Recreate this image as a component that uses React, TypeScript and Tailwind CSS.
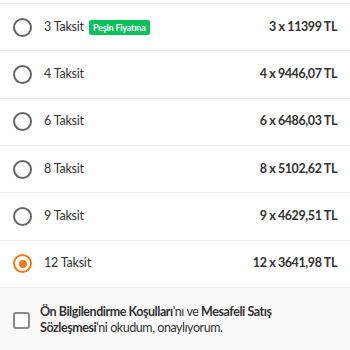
import { useState } from "react";

const options = [
  { count: 3, amount: "3 x 11399 TL", badge: true },
  { count: 4, amount: "4 x 9446,07 TL" },
  { count: 6, amount: "6 x 6486,03 TL" },
  { count: 8, amount: "8 x 5102,62 TL" },
  { count: 9, amount: "9 x 4629,51 TL" },
  { count: 12, amount: "12 x 3641,98 TL" },
];

const App = () => {
  const [selected, setSelected] = useState(12);

  return (
    <div className="w-[350px] h-[350px] overflow-hidden bg-white text-[#333] font-['Lato','Noto_Sans',sans-serif]">
      <div className="h-[4px] border-b border-[#ececec]"></div>
      {options.map((o) => {
        const active = o.count === selected;
        return (
          <div
            key={o.count}
            onClick={() => setSelected(o.count)}
            className="flex items-center h-[47.33px] border-b border-[#ececec] pl-[13px] pr-[13px] cursor-pointer"
          >
            <div
              className={`w-[19px] h-[19px] rounded-full border-2 flex items-center justify-center ${active ? "border-[#f27a1a]" : "border-[#666]"
                }`}
            >
              {active && <div className="w-[8px] h-[8px] rounded-full bg-[#f27a1a]"></div>}
            </div>
            <span className="ml-[12px] text-[12.5px] tracking-[-0.2px]">{o.count} Taksit</span>
            {o.badge && (
              <span className="ml-[5px] bg-[#0bc15c] text-white text-[9px] font-bold rounded-[2px] px-[4px] h-[15px] leading-[15px] tracking-[-0.2px]">
                Peşin Fiyatına
              </span>
            )}
            <span className="ml-auto text-[12.5px] font-bold tracking-[-0.4px]">{o.amount}</span>
          </div>
        );
      })}
      <div className="bg-[#fafafa] h-full flex items-start pt-[16px] pl-[13px]">
        <div className="w-[17px] h-[17px] mt-[8px] rounded-[3px] border-2 border-[#8a8a8a] bg-white shrink-0"></div>
        <p className="ml-[10px] text-[12.5px] leading-[16.5px] tracking-[-0.45px] pr-4">
          <b>Ön Bilgilendirme Koşulları</b>'nı ve <b>Mesafeli Satış Sözleşmesi</b>'ni okudum, onaylıyorum.
        </p>
      </div>
    </div>
  );
};

export default App;
